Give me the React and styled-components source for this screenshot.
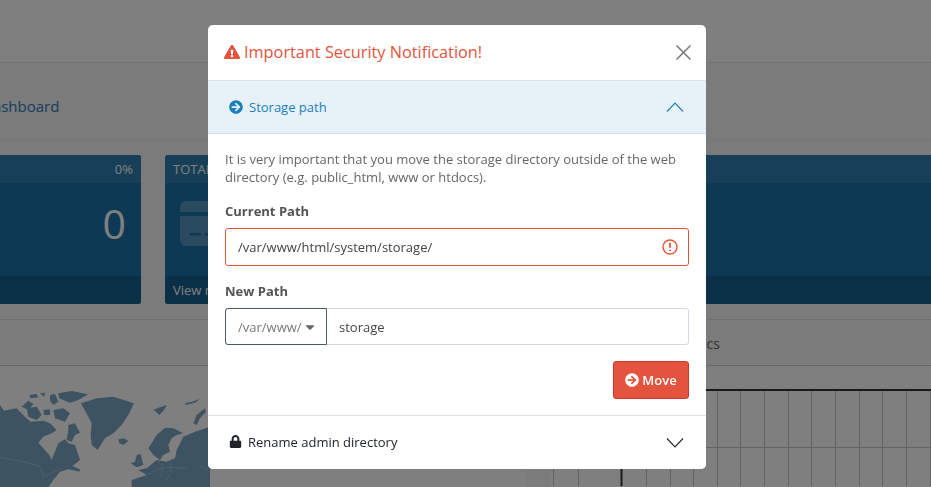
import React from "react";
import styled, { createGlobalStyle } from "styled-components";
import { FaExclamationTriangle, FaArrowCircleRight, FaLock, FaCaretDown } from "react-icons/fa";

const GlobalStyle = createGlobalStyle`
  html, body {
    margin: 0;
    height: 100%;
    overflow: hidden;
    background: #fff;
    font-family: "Open Sans", "Liberation Sans", sans-serif;
  }
`;

// dashboard behind the dialog, it is wider than the window
const Page = styled.div`
  width: 1217px;
  margin-left: -249px;
  height: 487px;
  background: #f6f6f6;
  overflow: hidden;
`;

const TopBar = styled.header`
  height: 62px;
  background: #fff;
  border-bottom: 1px solid #e6e6e6;
`;

const Crumbs = styled.nav`
  height: 77px;
  box-sizing: border-box;
  padding: 33px 0 0 231px;
  border-bottom: 1px solid #ececec;
  font-size: 15px;
  line-height: 20px;
  color: #2f7cc0;
`;

const Tiles = styled.div`
  display: grid;
  grid-template-columns: repeat(3, 390px);
  gap: 24px;
  margin-top: 15px;
`;

const Tile = styled.div`
  height: 149px;
  border-radius: 3px;
  overflow: hidden;
  display: flex;
  flex-direction: column;
  background: #1a72aa;
  color: #fff;
`;

const TileHead = styled.div`
  height: 28px;
  background: #2e7fb0;
  display: flex;
  align-items: center;
  justify-content: space-between;
  padding: 0 8px;
  font-size: 13px;
`;

const TileBody = styled.div`
  flex: 1;
  display: flex;
  align-items: center;
  justify-content: space-between;
  padding: 0 15px 12px;
  font-size: 41px;
  line-height: 1;
`;

const TileFoot = styled.div`
  height: 28px;
  background: #14608f;
  display: flex;
  align-items: center;
  padding: 0 8px;
  font-size: 13px;
`;

const Panels = styled.div`
  display: grid;
  grid-template-columns: 775px 1fr;
  gap: 24px;
  margin-top: 15px;
  border-top: 1px solid #e0e0e0;
`;

const Panel = styled.section`
  min-width: 0;
`;

const PanelTitle = styled.div`
  height: 46px;
  box-sizing: border-box;
  padding: 14px 0 0 ${(p) => p.$indent || 15}px;
  font-size: 14px;
  line-height: 20px;
  color: #666;
  border-bottom: 1px solid #ccc;
`;

const PanelBody = styled.div`
  background: #fff;
  height: 121px;
  display: flex;
  padding-top: ${(p) => p.$top}px;
  padding-left: ${(p) => p.$left || 0}px;
  box-sizing: border-box;
`;

const Overlay = styled.div`
  position: fixed;
  inset: 0;
  background: rgba(0, 0, 0, 0.5);
  display: flex;
  justify-content: center;
  align-items: flex-start;
  padding: 25px 17px 0 0;
  box-sizing: border-box;
`;

const Modal = styled.div`
  width: 498px;
  height: 444px;
  background: #fff;
  border-radius: 5px;
  overflow: hidden;
  display: flex;
  flex-direction: column;
`;

const ModalHead = styled.div`
  height: 55px;
  flex: none;
  display: flex;
  align-items: center;
  justify-content: space-between;
  padding: 0 15px 0 16px;
  border-bottom: 1px solid #dee2e6;
`;

const ModalTitle = styled.h5`
  margin: 0 0 2px;
  display: flex;
  align-items: center;
  gap: 4px;
  font-size: 16.3px;
  font-weight: 400;
  color: #e4543c;
`;

const CloseButton = styled.button`
  border: 0;
  padding: 0;
  background: none;
  display: flex;
  color: #777;
`;

const AccordionHead = styled.div`
  height: 53px;
  flex: none;
  box-sizing: border-box;
  display: flex;
  align-items: center;
  justify-content: space-between;
  padding: 0 22px 0 21px;
  font-size: 13px;
  color: ${(p) => (p.$open ? "#1b7fbd" : "#212529")};
  background: ${(p) => (p.$open ? "#e7f1f8" : "#fff")};
  border-bottom: ${(p) => (p.$open ? "1px solid #d5dfe6" : "none")};
`;

const AccordionLabel = styled.span`
  display: flex;
  align-items: center;
  gap: 6px;
  margin-bottom: ${(p) => (p.$lift ? 2 : 0)}px;
`;

const AccordionBody = styled.div`
  flex: 1;
  padding: 16px 17px 16px;
  border-bottom: 1px solid #dee2e6;
  color: #555;
`;

const Help = styled.p`
  margin: 0 0 16px;
  font-size: 13px;
  line-height: 18px;
  color: #666;
`;

const Label = styled.label`
  display: block;
  margin-bottom: 8px;
  font-size: 13px;
  line-height: 18px;
  font-weight: 700;
  color: #555;
`;

const Field = styled.div`
  height: ${(p) => (p.$invalid ? 38 : 37)}px;
  box-sizing: border-box;
  display: flex;
  align-items: center;
  margin-bottom: 16px;
  border: 1px solid ${(p) => (p.$invalid ? "#e4543c" : "#d3d9e0")};
  border-radius: 3px;
  padding-right: 10px;
`;

const TextInput = styled.input`
  flex: 1;
  min-width: 0;
  border: 0;
  outline: 0;
  padding: 0 12px;
  background: none;
  font: 400 13px "Open Sans", sans-serif;
  color: #444;
`;

const PathPrefix = styled.div`
  width: 102px;
  height: 37px;
  flex: none;
  box-sizing: border-box;
  margin: -1px 0 -1px -1px;
  padding-left: 12px;
  gap: 1px;
  display: flex;
  align-items: center;
  border: 1px solid #4d5c6a;
  border-radius: 3px 0 0 3px;
  font-size: 13px;
  color: #777;
  svg {
    color: #666;
  }
`;

const Actions = styled.div`
  display: flex;
  justify-content: flex-end;
`;

const MoveButton = styled.button`
  width: 76px;
  height: 38px;
  display: flex;
  align-items: center;
  justify-content: center;
  gap: 3px;
  padding: 0;
  background: #e4533d;
  border: 1px solid #c93a26;
  border-radius: 3px;
  font: 600 13px "Open Sans", sans-serif;
  color: #fff;
`;

const Chevron = ({ up, color }) => (
  <svg width="18" height="10" viewBox="0 0 18 10" fill="none" stroke={color} strokeWidth="1.1">
    <polyline points={up ? "1,9.5 9,1 17,9.5" : "1,0.5 9,9 17,0.5"} />
  </svg>
);

const CardIcon = () => (
  <svg width="68" height="45" viewBox="0 0 68 45">
    <path d="M0 11V6a6 6 0 0 1 6-6h56a6 6 0 0 1 6 6v5z" fill="#fff" fillOpacity="0.25" />
    <path
      fillRule="evenodd"
      d="M0 15h68v24a6 6 0 0 1-6 6H6a6 6 0 0 1-6-6zM10 32v2.500h11V32zM25 32v2.500h11V32z"
      fill="#fff"
      fillOpacity="0.25"
    />
  </svg>
);

const WorldMap = () => (
  <svg width="210" height="107" viewBox="0 0 630 321" fill="#7aa6c3">
    <path d="M0 75L12 92 50 85 72 108 92 125 130 122 150 130 170 150 155 160 130 170 115 188 130 205 148 225 155 240 165 215 175 190 195 178 205 190 225 195 240 240 218 258 240 268 238 275 205 268 180 275 160 300 145 321 0 321Z" />
    <path d="M243 70L290 55 340 50 402 70 385 105 365 135 340 160 315 175 293 210 275 195 272 165 275 130 262 105Z" />
    <path d="M65 80L85 62 100 72 85 90ZM88 45L110 42 115 52 92 55ZM80 85L110 80 125 105 110 120 85 110ZM120 40L135 38 132 50ZM150 45L165 42 175 65 160 75 150 62ZM175 40L215 33 265 43 235 60 210 68 190 60 178 55ZM130 90L150 88 150 105 132 105ZM160 90L190 85 210 100 195 125 165 115ZM205 135L225 130 240 158 225 165 215 185 200 180 205 150Z" />
    <path d="M355 178L372 175 385 183 370 195 358 190ZM460 90L480 82 500 75 492 90 478 105 468 95ZM580 130L590 105 615 85 618 95 600 115 590 135ZM555 70L575 65 600 57 585 68 557 75Z" />
    <path d="M630 140L585 155 550 170 530 210 525 235 500 245 470 240 440 265 415 270 440 285 395 300 395 321 630 321Z" />
    <path d="M445 205L470 165 495 143 520 145 550 160 530 165 515 175 505 195 510 215 490 225 480 240 460 225ZM410 225L422 222 430 255 410 262 392 250 405 245Z" />
    <path
      d="M0 232L70 245 120 260 130 290 185 265M470 240L490 262 480 290M510 245L515 275 500 300M440 285L490 262 560 265M595 255L625 270"
      fill="none"
      stroke="#a9c9de"
      strokeWidth="2"
    />
  </svg>
);

const Chart = () => (
  <svg width="381" height="97" viewBox="0 0 381 97" fill="none">
    <path
      d="M3.500 0V97M28.500 0V97M96.500 2V97M120.500 2V97M143.500 2V97M167.500 2V97M190.500 2V97M214.500 2V97M238.500 2V97M261.500 2V97M285.500 2V97M309.500 2V97M332.500 2V97M356.500 2V97M380.500 2V97M0 58.500H381"
      stroke="#c4c4c4"
    />
    <path d="M71.500 1V97M71 1H381" stroke="#333" strokeWidth="2" />
  </svg>
);

const tiles = ["TOTAL ORDERS", "TOTAL SALES", "TOTAL CUSTOMERS"];

export default function App() {
  return (
    <>
      <GlobalStyle />
      <Page>
        <TopBar />
        <Crumbs>Dashboard</Crumbs>
        <Tiles>
          {tiles.map((name) => (
            <Tile key={name}>
              <TileHead>
                <span>{name}</span>
                <span>0%</span>
              </TileHead>
              <TileBody>
                <CardIcon />
                <span>0</span>
              </TileBody>
              <TileFoot>View more...</TileFoot>
            </Tile>
          ))}
        </Tiles>
        <Panels>
          <Panel>
            <PanelTitle>World Map</PanelTitle>
            <PanelBody $top={14} $left={249}>
              <WorldMap />
            </PanelBody>
          </Panel>
          <Panel>
            <PanelTitle $indent={75}>Sales Analytics</PanelTitle>
            <PanelBody $top={23}>
              <Chart />
            </PanelBody>
          </Panel>
        </Panels>
      </Page>
      <Overlay>
        <Modal>
          <ModalHead>
            <ModalTitle>
              <FaExclamationTriangle size={16} />
              Important Security Notification!
            </ModalTitle>
            <CloseButton aria-label="Close">
              <svg width="15" height="15" viewBox="0 0 15 15" stroke="currentColor" strokeWidth="1.5">
                <path d="M0.500 0.500l14 14M14.500 0.500L0.500 14.500" />
              </svg>
            </CloseButton>
          </ModalHead>
          <AccordionHead $open>
            <AccordionLabel>
              <FaArrowCircleRight size={14} />
              Storage path
            </AccordionLabel>
            <Chevron up color="#1b7fbd" />
          </AccordionHead>
          <AccordionBody>
            <Help>
              It is very important that you move the storage directory outside of the web directory (e.g. public_html, www or htdocs).
            </Help>
            <Label>Current Path</Label>
            <Field $invalid>
              <TextInput readOnly value="/var/www/html/system/storage/" />
              <svg width="16" height="16" viewBox="0 0 16 16" fill="none" stroke="#e4543c">
                <circle cx="8" cy="8" r="7" strokeWidth="1.4" />
                <path d="M8 3.800v5" strokeWidth="1.800" />
                <path d="M8 10.700v1.600" strokeWidth="1.800" />
              </svg>
            </Field>
            <Label>New Path</Label>
            <Field>
              <PathPrefix>
                /var/www/
                <FaCaretDown size={14} />
              </PathPrefix>
              <TextInput readOnly value="storage" />
            </Field>
            <Actions>
              <MoveButton>
                <FaArrowCircleRight size={14} />
                Move
              </MoveButton>
            </Actions>
          </AccordionBody>
          <AccordionHead>
            <AccordionLabel $lift>
              <FaLock size={13} />
              Rename admin directory
            </AccordionLabel>
            <Chevron color="#212529" />
          </AccordionHead>
        </Modal>
      </Overlay>
    </>
  );
}
